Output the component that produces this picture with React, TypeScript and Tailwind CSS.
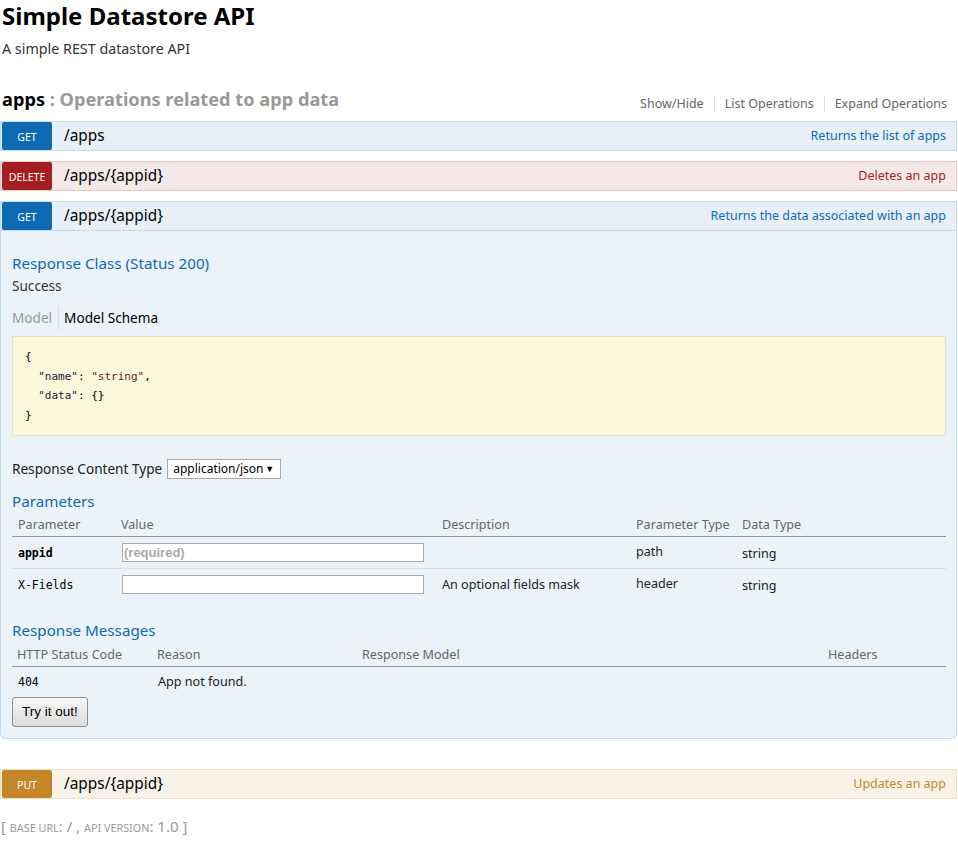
const kinds = {
  get: { head: 'bg-[#e7f0f7] border-[#c3d9ec]', badge: 'bg-[#0f6ab4]', desc: 'text-[#0f6ab4]' },
  delete: { head: 'bg-[#f5e8e8] border-[#e8c6c7]', badge: 'bg-[#a41e22]', desc: 'text-[#a41e22]' },
  put: { head: 'bg-[#f9f2e9] border-[#f0e0ca]', badge: 'bg-[#c5862b]', desc: 'text-[#c5862b]' },
};

type Kind = keyof typeof kinds;

function OpHeading({ kind, path, desc }: { kind: Kind; path: string; desc: string }) {
  const s = kinds[kind];
  return (
    <div className={`flex h-[30px] items-center border ${s.head}`}>
      <span
        className={`ml-[1px] flex h-[28px] w-[50px] items-center justify-center rounded-[2px] pt-[3px] text-[10.5px] uppercase text-white ${s.badge}`}
      >
        {kind}
      </span>
      <span className="ml-[12px] text-[15.4px] text-black">{path}</span>
      <span className={`ml-auto pr-[10px] text-[12.5px] ${s.desc}`}>{desc}</span>
    </div>
  );
}

const mono = "font-['DejaVu_Sans_Mono',monospace]";

export default function App() {
  return (
    <div className="w-[957px] bg-white pb-[20px] font-['Noto_Sans',sans-serif] text-[#333]">
      <div className="pl-[2px] pt-[1px]">
        <h1 className="text-[24px] font-bold leading-[30px] text-black">Simple Datastore API</h1>
        <p className="mt-[8px] text-[14.3px] leading-[20px] text-[#333]">A simple REST datastore API</p>
      </div>

      {/* resource heading */}
      <div className="mt-[28px] flex h-[24px] items-end justify-between pl-[2px]">
        <h2 className="text-[18.2px] font-bold leading-[24px] text-black">
          apps <span className="text-[#999]">: Operations related to app data</span>
        </h2>
        <ul className="mb-[-1px] flex items-end text-[12.5px] text-[#666]">
          <li className="h-[16px] px-[10px] leading-[16px]">Show/Hide</li>
          <li className="h-[16px] border-l border-[#ddd] px-[10px] leading-[16px]">List Operations</li>
          <li className="h-[16px] border-l border-[#ddd] px-[10px] leading-[16px]">Expand Operations</li>
        </ul>
      </div>

      <div className="mt-[10px] flex flex-col">
        <OpHeading kind="get" path="/apps" desc="Returns the list of apps" />
        <div className="mt-[10px]">
          <OpHeading kind="delete" path="/apps/{appid}" desc="Deletes an app" />
        </div>
        <div className="mt-[10px]">
          <OpHeading kind="get" path="/apps/{appid}" desc="Returns the data associated with an app" />
          <div className="rounded-b-[6px] border border-t-0 border-[#c3d9ec] bg-[#ebf3f9] pb-[11px] pl-[11px] pr-[10px] pt-[22px]">
            <h4 className="text-[15.2px] leading-[20px] text-[#0f6ab4]">Response Class (Status 200)</h4>
            <p className="mt-[3px] text-[13.6px] leading-[20px] text-[#333]">Success</p>
            <ul className="mt-[10px] flex text-[13.6px]">
              <li className="h-[24px] pr-[6px] leading-[24px] text-[#999]">Model</li>
              <li className="h-[24px] border-l border-[#ddd] pl-[5px] leading-[24px] text-black">Model Schema</li>
            </ul>
            <pre
              className={`mt-[6px] border border-[#e5e0c6] bg-[#fcf6db] px-[12px] py-[10px] text-[11px] leading-[19.5px] text-black ${mono}`}
            >
              <div>{'{'}</div>
              <div>
                {'  '}
                <span className="text-[#1a1a40]">"name"</span>: <span className="text-[#5a1e1e]">"string"</span>,
              </div>
              <div>
                {'  '}
                <span className="text-[#1a1a40]">"data"</span>: {'{}'}
              </div>
              <div>{'}'}</div>
            </pre>

            <div className="mt-[23px] flex h-[20px] items-center">
              <span className="text-[13.6px] leading-[20px] text-[#222]">Response Content Type</span>
              <div className="ml-[5px] flex h-[20px] w-[114px] items-center border border-[#a9a9a9] bg-white pl-[5px] pr-[6px] text-[12px] text-black">
                <span>application/json</span>
                <span className="ml-auto text-[9px]">▼</span>
              </div>
            </div>

            <h4 className="mt-[12px] text-[15.2px] leading-[20px] text-[#0f6ab4]">Parameters</h4>
            <div className="grid grid-cols-[103px_321px_194px_106px_1fr] border-b border-[#999] pb-[3px] pt-[6px] text-[12.6px] leading-[16px] text-[#666]">
              <span className="pl-[6px]">Parameter</span>
              <span className="pl-[6px]">Value</span>
              <span className="pl-[6px]">Description</span>
              <span className="pl-[6px]">Parameter Type</span>
              <span className="pl-[6px]">Data Type</span>
            </div>
            <div className="grid grid-cols-[103px_321px_194px_106px_1fr] items-center border-b border-[#ddd] py-[6px] text-[12.6px] leading-[16px] text-[#222]">
              <span className={`pl-[6px] text-[11.5px] font-bold text-black ${mono}`}>appid</span>
              <span className="pl-[7px]">
                <input
                  readOnly
                  placeholder="(required)"
                  className="block h-[19px] w-[302px] border border-[#a9a9a9] bg-white px-[1px] font-['Liberation_Sans',sans-serif] text-[13px] font-bold outline-none placeholder:text-[#aaa]"
                />
              </span>
              <span className="pl-[6px]"></span>
              <span className="pl-[6px] pb-[2px]">path</span>
              <span className="pl-[6px] pt-[3px]">string</span>
            </div>
            <div className="grid grid-cols-[103px_321px_194px_106px_1fr] items-center py-[6px] text-[12.6px] leading-[16px] text-[#222]">
              <span className={`pl-[6px] text-[11.5px] text-black ${mono}`}>X-Fields</span>
              <span className="pl-[7px]">
                <input
                  readOnly
                  className="block h-[19px] w-[302px] border border-[#a9a9a9] bg-white outline-none"
                />
              </span>
              <span className="pl-[6px]">An optional fields mask</span>
              <span className="pl-[6px] pb-[1px]">header</span>
              <span className="pl-[6px] pt-[2px]">string</span>
            </div>

            <h4 className="mt-[20px] text-[15.2px] leading-[20px] text-[#0f6ab4]">Response Messages</h4>
            <div className="grid grid-cols-[140px_205px_466px_1fr] border-b border-[#999] pb-[3px] pt-[7px] text-[12.6px] leading-[16px] text-[#666]">
              <span className="pl-[5px]">HTTP Status Code</span>
              <span className="pl-[5px]">Reason</span>
              <span className="pl-[5px]">Response Model</span>
              <span className="pl-[5px]">Headers</span>
            </div>
            <div className="grid grid-cols-[140px_205px_466px_1fr] items-center pb-[5px] pt-[7px] text-[12.6px] leading-[16px] text-[#222]">
              <span className={`pl-[6px] text-[11.5px] text-black ${mono}`}>404</span>
              <span className="pl-[6px]">App not found.</span>
              <span></span>
              <span></span>
            </div>

            <button className="mt-[2px] flex h-[30px] w-[76px] items-center justify-center rounded-[3px] border border-[#8f8f8f] bg-linear-to-b from-[#f7f7f7] to-[#dcdcdc] font-['Liberation_Sans',sans-serif] text-[13.5px] text-black">
              Try it out!
            </button>
          </div>
        </div>
        <div className="mt-[30px]">
          <OpHeading kind="put" path="/apps/{appid}" desc="Updates an app" />
        </div>
      </div>

      <div className="mt-[17px] pl-[1px] text-[15px] leading-[20px] text-[#999]">
        [ <span className="text-[10.8px] uppercase">base url</span>: / , <span className="text-[10.8px] uppercase">api version</span>: 1.0 ]
      </div>
    </div>
  );
}
